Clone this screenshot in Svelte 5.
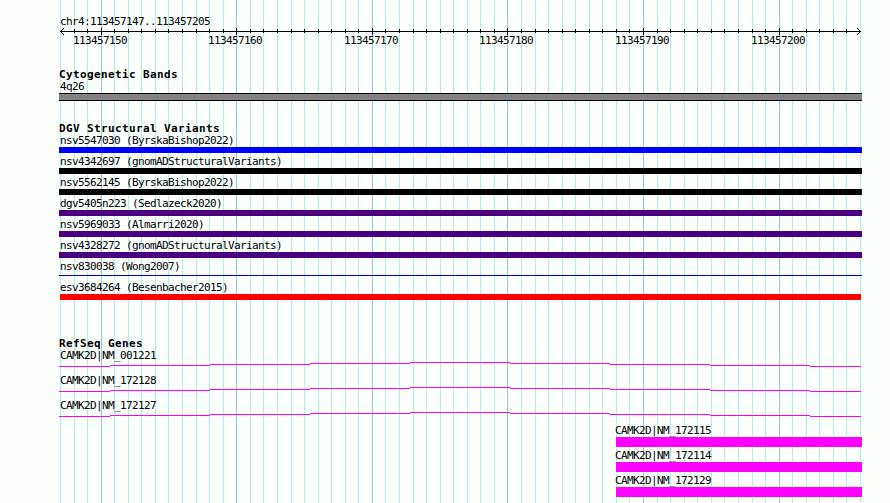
<script lang="ts">
  const start = 113457147;
  const end = 113457205;
  const left = 60;
  const width = 800;

  // one grid line per base, plus the closing edge
  const ticks = Array.from({ length: end - start + 2 }, (_, i) => ({
    pos: start + i,
    x: Math.round((i * width) / (end - start + 1)),
    major: (start + i) % 10 === 0,
  }));

  const variants = [
    { name: "nsv5547030 (ByrskaBishop2022)", kind: "blue" },
    { name: "nsv4342697 (gnomADStructuralVariants)", kind: "black" },
    { name: "nsv5562145 (ByrskaBishop2022)", kind: "black" },
    { name: "dgv5405n223 (Sedlazeck2020)", kind: "indigo" },
    { name: "nsv5969033 (Almarri2020)", kind: "indigo" },
    { name: "nsv4328272 (gnomADStructuralVariants)", kind: "indigo" },
    { name: "nsv830038 (Wong2007)", kind: "thin" },
    { name: "esv3684264 (Besenbacher2015)", kind: "red" },
  ];

  const introns = ["CAMK2D|NM_001221", "CAMK2D|NM_172128", "CAMK2D|NM_172127"];
  const exons = ["CAMK2D|NM_172115", "CAMK2D|NM_172114", "CAMK2D|NM_172129"];
</script>

<div class="browser">
  <div class="grid">
    {#each ticks as tick}
      <i class:major={tick.major} style="left: {left + tick.x}px"></i>
    {/each}
  </div>

  <div class="tracks">
    <header class="ruler">
      <p class="label">chr4:113457147..113457205</p>
      <svg class="scale" width="803" height="9" viewBox="0 0 803 9" shape-rendering="crispEdges">
        <path d="M1 4.5H802" />
        <path d="M1 4h1v1h-1z M2 3h1v1h-1z M2 5h1v1h-1z M3 2h1v1h-1z M3 6h1v1h-1z M4 1h1v1h-1z M4 7h1v1h-1z" class="head" />
        <path d="M801 4h1v1h-1z M800 3h1v1h-1z M800 5h1v1h-1z M799 2h1v1h-1z M799 6h1v1h-1z M798 1h1v1h-1z M798 7h1v1h-1z" class="head" />
        {#each ticks.slice(1, -1) as tick}
          <path d="M{tick.x + 1.5} {tick.major ? 1 : 2}V{tick.major ? 8 : 6}" />
        {/each}
      </svg>
      <div class="numbers">
        {#each ticks.filter(t => t.major) as tick}
          <span style="left: {tick.x - 27}px">{tick.pos}</span>
        {/each}
      </div>
    </header>

    <section class="bands">
      <h2>Cytogenetic Bands</h2>
      <p class="label">4q26</p>
      <div class="band"></div>
    </section>

    <section class="variants">
      <h2>DGV Structural Variants</h2>
      {#each variants as variant}
        <div class="variant">
          <p class="label">{variant.name}</p>
          <div class="bar {variant.kind}"></div>
        </div>
      {/each}
    </section>

    <section class="genes">
      <h2>RefSeq Genes</h2>
      {#each introns as name}
        <div class="gene">
          <p class="label">{name}</p>
          <svg class="intron" width="803" height="5" viewBox="0 0 803 5" shape-rendering="crispEdges">
            <path d="M0 4.5H51M51 3.5H151M151 2.5H251M251 1.5H351M351 .5H451M451 1.5H551M551 2.5H651M651 3.5H751M751 4.5H802" />
          </svg>
        </div>
      {/each}
      {#each exons as name}
        <div class="gene exon">
          <p class="label">{name}</p>
          <div class="block"></div>
        </div>
      {/each}
    </section>
  </div>
</div>

<style>
  :global(body) {
    background: #fdfffc;
  }

  .browser {
    position: relative;
    width: 890px;
    height: 503px;
    overflow: hidden;
    background: #fdfffc;
    color: #000;
    font-family: "DejaVu Sans Mono", monospace;
  }

  .grid i {
    position: absolute;
    top: 0;
    bottom: 0;
    width: 1px;
    background: #afeeee;
  }
  .grid i.major {
    background: #87ceeb;
  }

  .tracks {
    position: relative;
    width: 803px;
    margin-left: 59px;
    padding-top: 16px;
  }

  .label,
  .numbers span {
    margin: 0;
    height: 12px;
    font-size: 11px;
    line-height: 12px;
    letter-spacing: -0.622px;
    white-space: pre;
  }

  .label {
    padding-left: 1px;
  }

  h2 {
    margin: 0;
    height: 12px;
    font-size: 11px;
    font-weight: 700;
    line-height: 12px;
    letter-spacing: 0.378px;
    white-space: pre;
  }

  svg {
    display: block;
    fill: none;
    stroke: #000;
    stroke-width: 1;
  }

  .scale {
    margin-top: -1px;
  }
  .scale .head {
    fill: #000;
    stroke: none;
  }

  .numbers {
    position: relative;
    height: 12px;
    margin-top: -1px;
  }
  .numbers span {
    position: absolute;
    top: 0;
  }

  .bands {
    margin-top: 22px;
  }

  .band {
    box-sizing: border-box;
    height: 8px;
    border: solid #000;
    border-width: 1px 0;
    background: #848284;
  }

  .variants {
    margin-top: 22px;
  }

  .variant {
    height: 21px;
  }

  .bar {
    height: 6px;
  }
  .bar.blue {
    background: #00f;
  }
  .bar.black {
    background: #000;
  }
  .bar.indigo {
    background: #4b0082;
  }
  .bar.red {
    width: 801px;
    margin-left: 1px;
    background: #f00;
  }
  .bar.thin {
    position: relative;
    top: 2px;
    height: 1px;
    background: #0000cd;
  }

  .genes {
    margin-top: 35px;
  }

  .gene {
    height: 25px;
  }

  .intron {
    stroke: #f0f;
  }

  .exon {
    margin-left: 555px;
  }

  .block {
    height: 10px;
    margin-left: 2px;
    background: #f0f;
  }
</style>
